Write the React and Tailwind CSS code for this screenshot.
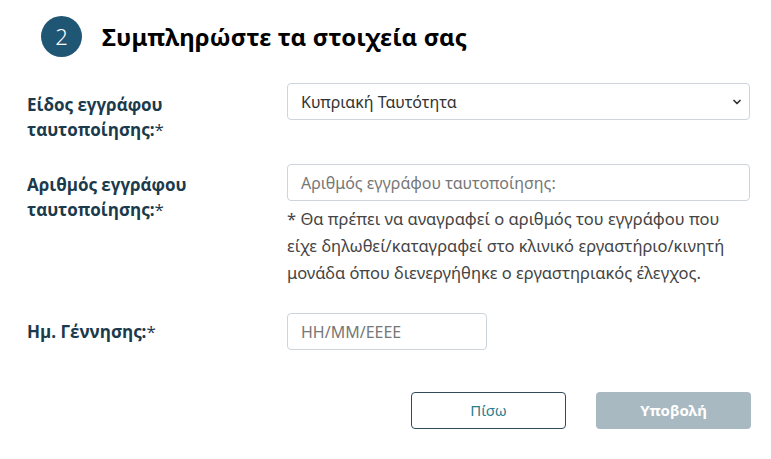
import { ChevronDown } from 'lucide-react';

const labelCls = "font-['Open_Sans',sans-serif] font-bold text-[17px] leading-[25px] text-[#1b3a4b]";
const fieldCls = "h-[37px] w-full rounded-[4px] border border-[#ced4da] bg-white px-[13px] font-['Noto_Sans',sans-serif] text-[16px] text-[#333] placeholder:text-[#777] outline-none";

const App = () => {
  return (
    <div className="min-h-screen bg-white font-['Noto_Sans',sans-serif]">
      {/* Step header */}
      <div className="flex items-center gap-[20px] pl-[41px] pt-[16px]">
        <div className="flex h-[41px] w-[41px] items-center justify-center rounded-full bg-[#1f5673] text-[22px] font-light text-white">
          2
        </div>
        <h1 className="text-[24px] font-bold tracking-[0.1px] text-black">Συμπληρώστε τα στοιχεία σας</h1>
      </div>

      <form className="w-[751px] pl-[27px]" onSubmit={(e) => e.preventDefault()}>
        {/* Document type */}
        <div className="mt-[26px] grid grid-cols-[260px_463px] items-start">
          <label className={`${labelCls} pt-[9px]`}>
            Είδος εγγράφου<br />ταυτοποίησης:<span className="font-normal">*</span>
          </label>
          <div className="relative">
            <select className={`${fieldCls} appearance-none pr-[30px]`} defaultValue="cy">
              <option value="cy">Κυπριακή Ταυτότητα</option>
              <option value="pass">Διαβατήριο</option>
            </select>
            <ChevronDown className="pointer-events-none absolute right-[7px] top-1/2 h-[12px] w-[12px] -translate-y-1/2 text-[#333]" strokeWidth={3.5} />
          </div>
        </div>

        {/* Document number */}
        <div className="mt-[22px] grid grid-cols-[260px_463px] items-start">
          <label className={`${labelCls} pt-[8px]`}>
            Αριθμός εγγράφου<br />ταυτοποίησης:<span className="font-normal">*</span>
          </label>
          <div>
            <input type="text" className={fieldCls} placeholder="Αριθμός εγγράφου ταυτοποίησης:" />
            <p className="mt-[4px] whitespace-nowrap text-[16.5px] leading-[27px] text-[#444]">
              * Θα πρέπει να αναγραφεί ο αριθμός του εγγράφου που<br />
              είχε δηλωθεί/καταγραφεί στο κλινικό εργαστήριο/κινητή<br />
              μονάδα όπου διενεργήθηκε ο εργαστηριακός έλεγχος.
            </p>
          </div>
        </div>

        {/* Date of birth */}
        <div className="mt-[27px] grid grid-cols-[260px_463px] items-center">
          <label className={labelCls}>
            Ημ. Γέννησης:<span className="font-normal">*</span>
          </label>
          <div className="w-[200px]">
            <input type="text" className={fieldCls} placeholder="ΗΗ/ΜΜ/ΕΕΕΕ" />
          </div>
        </div>

        {/* Actions */}
        <div className="mt-[42px] flex justify-end gap-[30px]">
          <button type="button" className="h-[37px] w-[155px] rounded-[4px] border border-[#2f4b57] bg-white text-[15px] text-[#2b7d8c]">
            Πίσω
          </button>
          <button type="submit" disabled className="h-[37px] w-[155px] rounded-[4px] bg-[#a8b9c1] text-[15px] font-bold text-white">
            Υποβολή
          </button>
        </div>
      </form>
    </div>
  );
};

export default App;
